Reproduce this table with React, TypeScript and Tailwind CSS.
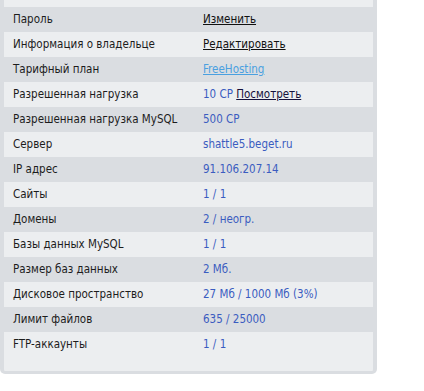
import React from "react";

type Row = { label: string; value: React.ReactNode };

const blue = "text-[#3a5cc0]";

const rows: Row[] = [
  { label: "Пароль", value: <a className="text-[#111] underline">Изменить</a> },
  { label: "Информация о владельце", value: <a className="text-[#111] underline">Редактировать</a> },
  { label: "Тарифный план", value: <a className="text-[#4aa0e0] underline">FreeHosting</a> },
  {
    label: "Разрешенная нагрузка",
    value: (
      <span>
        <span className={blue}>10 CP</span> <a className="text-[#14103a] underline">Посмотреть</a>
      </span>
    ),
  },
  { label: "Разрешенная нагрузка MySQL", value: <span className={blue}>500 CP</span> },
  { label: "Сервер", value: <span className={blue}>shattle5.beget.ru</span> },
  { label: "IP адрес", value: <span className={blue}>91.106.207.14</span> },
  { label: "Сайты", value: <span className={blue}>1 / 1</span> },
  { label: "Домены", value: <span className={blue}>2 / неогр.</span> },
  { label: "Базы данных MySQL", value: <span className={blue}>1 / 1</span> },
  { label: "Размер баз данных", value: <span className={blue}>2 Мб.</span> },
  { label: "Дисковое пространство", value: <span className={blue}>27 Мб / 1000 Мб (3%)</span> },
  { label: "Лимит файлов", value: <span className={blue}>635 / 25000</span> },
  { label: "FTP-аккаунты", value: <span className={blue}>1 / 1</span> },
];

export default function App() {
  return (
    <div className="w-[424px] h-[391px] bg-white overflow-hidden" style={{ fontFamily: '"DejaVu Sans Condensed", "DejaVu Sans", sans-serif' }}>
      <div className="w-[377px] -mt-[18px] bg-[#eceef0] border-x-4 border-b-[3px] border-[#dadde1] rounded-b-[5px] pb-[14px] text-[11.5px] text-[#1c1c1c]">
        <div className="h-[25px]" />
        {rows.map((r, i) => (
          <div
            key={r.label}
            className={`flex items-center h-[25px] ${i % 2 === 0 ? "bg-[#dadde1]" : "bg-[#eceef0]"}`}
          >
            <div className="w-[199px] pl-[9px] shrink-0">{r.label}</div>
            <div>{r.value}</div>
          </div>
        ))}
      </div>
    </div>
  );
}
